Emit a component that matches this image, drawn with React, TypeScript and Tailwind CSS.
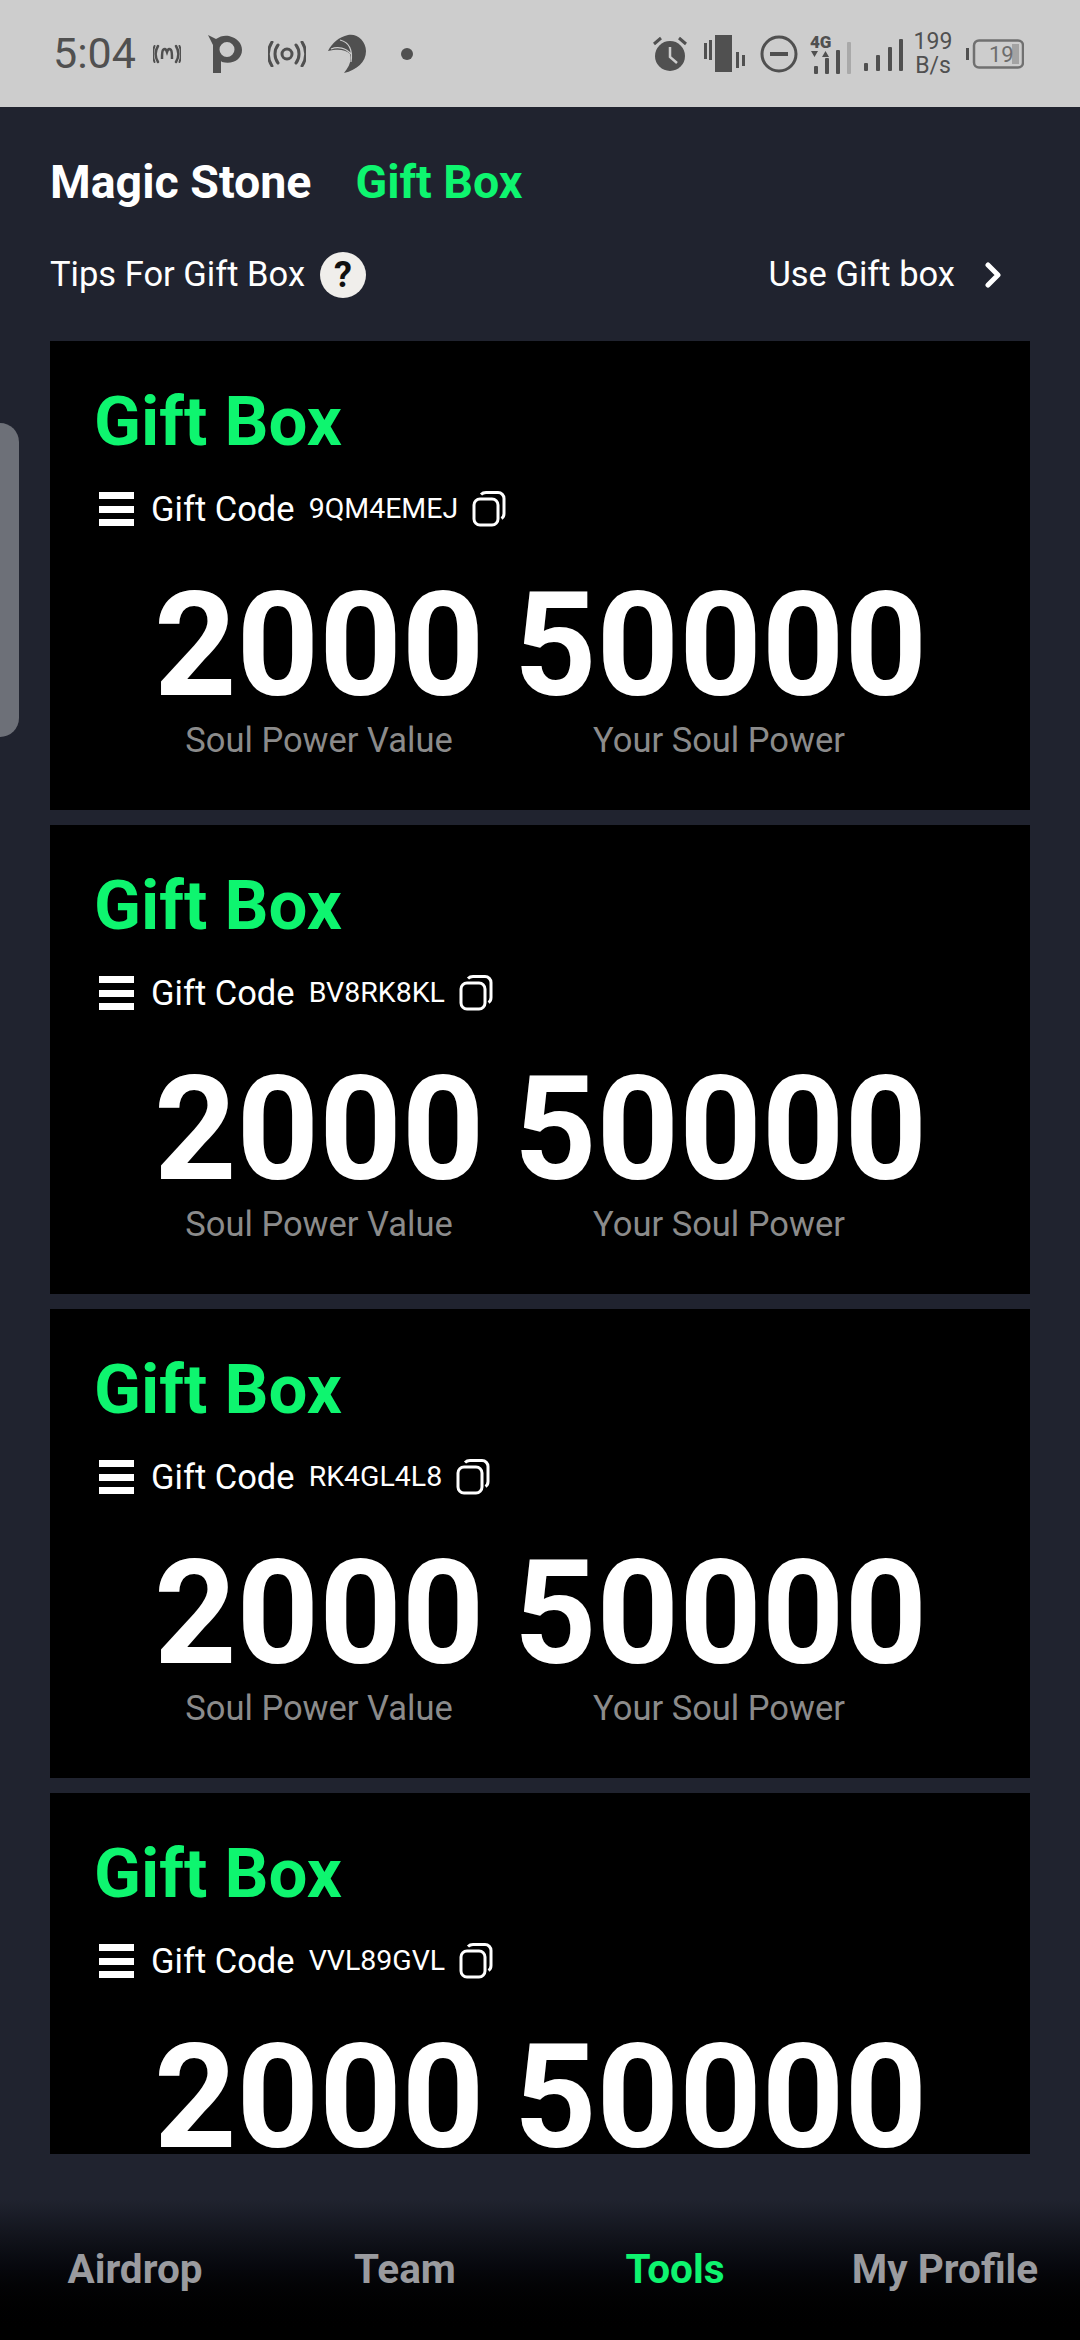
const codes = ["9QM4EMEJ", "BV8RK8KL", "RK4GL4L8", "VVL89GVL"];
const tabs = ["Airdrop", "Team", "Tools", "My Profile"];

const StatusBar = () => (
  <div className="flex h-[107px] shrink-0 items-center justify-between bg-[#cdcdcd] pl-[53px] pr-[56px] text-[#505050]">
    <div className="flex items-center">
      <span className="w-[83px] text-[43px] leading-none">5:04</span>
      <svg width="28" height="22" viewBox="0 0 28 22" fill="none" stroke="currentColor" strokeWidth="2.500" className="ml-[17px]">
        <path d="M9 16c0-4 0-8 1-9 2-2 3-1 4 2 1-3 2-4 4-2 1 1 1 5 1 9" />
        <path d="M5 3c-3 5-3 11 0 16M23 3c3 5 3 11 0 16" strokeLinecap="round" />
        <path d="M1.500 3c-2 5-2 11 0 16M26.500 3c2 5 2 11 0 16" strokeWidth="2" strokeLinecap="round" />
      </svg>
      <svg width="34" height="38" viewBox="0 0 34 38" fill="currentColor" className="ml-[27px]">
        <path fillRule="evenodd" d="M0 0l8 4c4-3 9-4 13-3 8 2 13 7 13 14 0 9-9 15-20 12l-1-1v12H5V10L0 0zm19 7a7 7 0 100 15 7 7 0 000-15z" />
      </svg>
      <svg width="38" height="26" viewBox="0 0 38 26" fill="none" stroke="currentColor" strokeWidth="3" className="ml-[26px]">
        <circle cx="19" cy="13" r="5" />
        <path d="M10 4c-4 5-4 13 0 18M28 4c4 5 4 13 0 18M4 1c-5 8-5 16 0 24M34 1c5 8 5 16 0 24" strokeLinecap="round" />
      </svg>
      <svg width="38" height="39" viewBox="0 0 38 39" fill="currentColor" className="ml-[22px]">
        <path d="M0 17C4 9 11 3 20 1c9-2 18 6 18 16 0 11-9 19-22 22 5-6 8-12 6-19-5-5-13-5-22-3z" />
        <path d="M12 6c8 2 13 9 11 22M3 15c7-3 15-1 20 5" stroke="#cdcdcd" strokeWidth="1.200" fill="none" />
      </svg>
      <div className="ml-[35px] h-[12px] w-[12px] rounded-full bg-current" />
    </div>
    <div className="flex items-center">
      <svg width="34" height="36" viewBox="0 0 34 36" fill="currentColor">
        <circle cx="17" cy="20" r="15" />
        <path d="M17 11v10l7 6" stroke="#cdcdcd" strokeWidth="2.500" fill="none" />
        <path d="M1 8l7-6M33 8l-7-6" stroke="currentColor" strokeWidth="3" fill="none" />
      </svg>
      <svg width="42" height="38" viewBox="0 0 42 38" fill="currentColor" className="ml-[17px]">
        <rect x="11" y="0" width="17" height="37" />
        <rect x="0" y="8" width="3" height="16" />
        <rect x="5" y="5" width="3" height="20" />
        <rect x="32" y="17" width="3" height="16" />
        <rect x="38" y="20" width="3" height="11" />
      </svg>
      <svg width="38" height="38" viewBox="0 0 38 38" fill="none" stroke="currentColor" strokeWidth="3" className="ml-[14px]">
        <circle cx="19" cy="19" r="17" />
        <path d="M10 19h18" strokeWidth="4" />
      </svg>
      <svg width="42" height="42" viewBox="0 0 42 42" fill="currentColor" className="ml-[12px]">
        <text x="0" y="15" fontFamily="Roboto, sans-serif" fontSize="17" fontWeight="900">4G</text>
        <path d="M1 18h7l-3.500 6zM12 24h7l-3.500-6z" />
        <rect x="4" y="33" width="4" height="8" rx="1" />
        <rect x="15" y="25" width="4" height="16" rx="1" />
        <rect x="26" y="17" width="4" height="24" rx="1" />
        <rect x="37" y="9" width="4" height="32" rx="1" fill="#a9a9a9" />
      </svg>
      <svg width="39" height="32" viewBox="0 0 39 32" fill="currentColor" className="ml-[12px] mt-[3px]">
        <rect x="0" y="24" width="4" height="8" rx="1" />
        <rect x="12" y="16" width="4" height="16" rx="1" />
        <rect x="24" y="8" width="4" height="24" rx="1" />
        <rect x="35" y="0" width="4" height="32" rx="1" />
      </svg>
      <div className="ml-[11px] flex w-[38px] flex-col items-center text-[23px] leading-[24px]">
        <span>199</span>
        <span>B/s</span>
      </div>
      <svg width="58" height="30" viewBox="0 0 58 30" className="ml-[14px]" fill="none">
        <rect x="0" y="9" width="3" height="12" fill="currentColor" />
        <rect x="8" y="1.500" width="49" height="27" rx="5" stroke="#707070" strokeWidth="2.500" />
        <rect x="46" y="5" width="7" height="20" fill="#a3a3a3" />
        <text x="23" y="23" fontFamily="Roboto, sans-serif" fontSize="22" fill="#6d6d6d">19</text>
      </svg>
    </div>
  </div>
);

const GiftCard = ({ code }: { code: string }) => (
  <div className="h-[469px] shrink-0 bg-black pl-[44px] pt-[43px]">
    <h2 className="text-[69px] font-bold leading-[75px] text-[#0ef56f]">Gift Box</h2>
    <div className="mt-[30px] flex h-[40px] items-center text-white">
      <div className="ml-[5px] flex h-[34px] w-[35px] flex-col justify-between">
        <div className="h-[7px] bg-white" />
        <div className="h-[7px] bg-white" />
        <div className="h-[7px] bg-white" />
      </div>
      <span className="ml-[17px] text-[34.500px] leading-none">Gift Code</span>
      <span className="ml-[14px] text-[28.500px] leading-none">{code}</span>
      <svg width="34" height="36" viewBox="0 0 34 36" fill="none" stroke="#fff" strokeWidth="3" className="ml-[14px]">
        <rect x="2" y="8" width="24" height="26" rx="6" />
        <path d="M9 3.500c1-1 3-2 5-2h12c3.500 0 6 3 6 6v15c0 2-1 4-2.500 5" />
      </svg>
    </div>
    <div className="mt-[52px] flex text-center">
      <div className="ml-[60px] w-[330px]">
        <div className="text-[144px] font-bold leading-[130px] text-white">2000</div>
        <div className="mt-[9px] text-[34.500px] leading-[40px] text-[#8b8b8b]">Soul Power Value</div>
      </div>
      <div className="ml-[30px] w-[410px]">
        <div className="text-[144px] font-bold leading-[130px] text-white">50000</div>
        <div className="mt-[9px] text-[34.500px] leading-[40px] text-[#8b8b8b]">Your Soul Power</div>
      </div>
    </div>
  </div>
);

const App = () => (
  <div className="relative flex h-[2340px] w-[1080px] flex-col overflow-hidden bg-[#20232f] font-['Roboto',sans-serif]">
    <StatusBar />

    <div className="mt-[50px] flex items-center gap-[44px] pl-[50px] text-[46.500px] font-bold leading-[50px]">
      <span className="text-white">Magic Stone</span>
      <span className="text-[#0ef56f]">Gift Box</span>
    </div>

    <div className="mt-[44px] flex h-[48px] items-center justify-between pl-[50px] pr-[78px] text-[34.500px] text-white">
      <div className="flex items-center">
        <span>Tips For Gift Box</span>
        <span className="ml-[15px] flex h-[46px] w-[46px] items-center justify-center rounded-full bg-[#f0eeeb] text-[36px] font-bold leading-none text-[#111]">?</span>
      </div>
      <div className="flex items-center">
        <span>Use Gift box</span>
        <svg width="18" height="26" viewBox="0 0 18 26" fill="none" stroke="#fff" strokeWidth="5" strokeLinecap="round" strokeLinejoin="round" className="ml-[29px]">
          <path d="M4 3l10 10L4 23" />
        </svg>
      </div>
    </div>

    <div className="mx-[50px] mt-[42px] flex h-[1813px] shrink-0 flex-col gap-[15px] overflow-hidden">
      {codes.map((code) => (
        <GiftCard key={code} code={code} />
      ))}
    </div>

    <div className="absolute bottom-0 left-0 right-0 grid h-[140px] grid-cols-4 bg-gradient-to-b from-[#20232f] to-black pt-[46px] text-center text-[40.500px] font-bold leading-[46px] text-[#9a9b9f]">
      {tabs.map((tab) => (
        <span key={tab} className={tab === "Tools" ? "text-[#0ef56f]" : ""}>
          {tab}
        </span>
      ))}
    </div>

    <div className="absolute left-0 top-[423px] h-[314px] w-[19px] rounded-r-[40px] bg-[#6d7078]" />
  </div>
);

export default App;
